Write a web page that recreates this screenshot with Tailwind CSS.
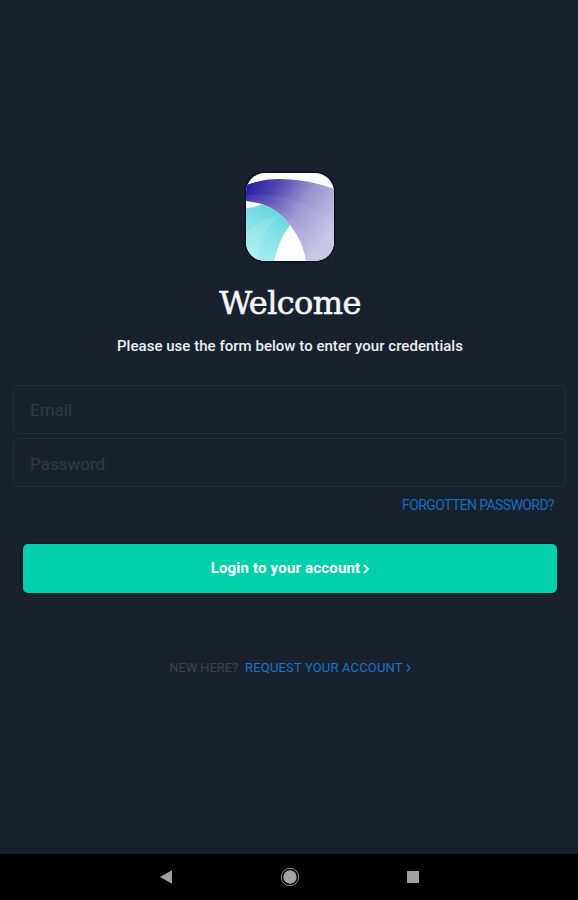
<!DOCTYPE html>
<html lang="en">
<head>
    <meta charset="UTF-8">
    <meta name="viewport" content="width=device-width, initial-scale=1.0">
    <title>Welcome</title>
    <script src="https://cdn.jsdelivr.net/npm/@tailwindcss/browser@4"></script>
</head>
<body class="bg-[#1a212e] font-['Roboto',sans-serif]">
    <div class="h-screen flex flex-col overflow-hidden">
        <main class="flex-1 flex flex-col items-center pt-[173px]">
            <!-- App logo -->
            <div class="ml-0.5 w-[88px] h-[88px] rounded-[19px] overflow-hidden bg-white ring-[1.5px] ring-[#0d111b] shrink-0">
                <svg viewBox="0 0 88 88" class="w-full h-full">
                    <defs>
                        <linearGradient id="purple" x1="0" y1="0.1" x2="0.95" y2="0.65">
                            <stop offset="0" stop-color="#2a1ca4"/>
                            <stop offset="0.25" stop-color="#4f43b0"/>
                            <stop offset="0.6" stop-color="#9993cf"/>
                            <stop offset="1" stop-color="#c6c2e4"/>
                        </linearGradient>
                        <linearGradient id="teal" x1="0.7" y1="0" x2="0.25" y2="1">
                            <stop offset="0" stop-color="#5fd3dc"/>
                            <stop offset="0.5" stop-color="#86e2e8"/>
                            <stop offset="1" stop-color="#a8eef0"/>
                        </linearGradient>
                    </defs>
                    <path fill="url(#purple)" d="M0 12Q16 6 34 6Q62 6 88 16V88H60Q57 68 44 52Q33 37 16 31Q8 29 0 28Z"/>
                    <path fill="#fff" fill-opacity=".06" d="M0 22Q50 18 88 50V88H60Q57 68 44 52Q33 37 16 31Q8 29 0 28Z"/>
                    <path fill="#fff" fill-opacity=".05" d="M0 26Q48 28 76 88H60Q57 68 44 52Q33 37 16 31Q8 29 0 28Z"/>
                    <path fill="url(#teal)" d="M0 35Q9 35 16 31Q33 37 44 52Q33 66 28 88H0Z"/>
                    <path fill="#fff" fill-opacity=".12" d="M0 60Q12 47 34 42Q16 56 11 88H0Z"/>
                </svg>
            </div>

            <h1 class="ml-0.5 mt-[22px] h-10 leading-10 text-[32px] text-[#f4f5f6] font-['DejaVu_Serif',serif] tracking-[-0.6px] [-webkit-text-stroke:0.6px_#f4f5f6] whitespace-nowrap">Welcome</h1>
            <p class="ml-0.5 mt-[11px] h-6 leading-6 text-[15px] font-medium text-[#eceef0] tracking-[0.03px] whitespace-nowrap">Please use the form below to enter your credentials</p>

            <!-- Login form -->
            <form class="w-full mt-[27px] pl-[13px] pr-3 flex flex-col">
                <input type="email" placeholder="Email" class="w-full h-[49px] px-4 rounded-md border border-[#262e3a] text-[17px] text-white placeholder:text-[#303945]">
                <input type="password" placeholder="Password" class="w-full mt-1 h-[49px] px-4 pt-0.5 rounded-md border border-[#262e3a] text-[17px] text-white placeholder:text-[#303945]">
                <a href="#" class="self-end mt-2 mr-3 h-5 leading-5 text-sm text-[#146cbe] tracking-[-0.6px] whitespace-nowrap">FORGOTTEN PASSWORD?</a>
                <button type="button" class="mt-[29px] ml-2.5 mr-[9px] h-[49px] rounded-[5px] bg-[#00d1ab] ring-1 ring-[#131a29] flex items-center justify-center gap-[3px] text-[15px] font-bold text-white">
                    <span class="tracking-[0.18px] whitespace-nowrap">Login to your account</span>
                    <svg viewBox="0 0 6 10" class="w-1.5 h-2.5" fill="none" stroke="currentColor" stroke-width="1.8"><path d="M1 1l4 4-4 4"/></svg>
                </button>
            </form>

            <div class="ml-0.5 mt-[65px] flex items-center h-5 text-[13px] whitespace-nowrap">
                <span class="text-[#3c434d] tracking-[-0.1px]">NEW HERE?</span>
                <a href="#" class="ml-[7px] flex items-center gap-[3px] text-[#1476c9]">
                    <span class="tracking-[0.16px]">REQUEST YOUR ACCOUNT</span>
                    <svg viewBox="0 0 5 8" class="w-[5px] h-2" fill="none" stroke="currentColor" stroke-width="1.3"><path d="M1 .7l3 3.3-3 3.3"/></svg>
                </a>
            </div>
        </main>

        <!-- Android navigation bar -->
        <nav class="h-[46px] bg-black shrink-0 flex justify-between items-center pl-40 pr-[159px]">
            <svg viewBox="0 0 12 14" class="w-3 h-3.5" fill="#a0a0a0"><path d="M0 7L12 .3V13.7Z"/></svg>
            <svg viewBox="0 0 20 20" class="w-5 h-5"><circle cx="10" cy="10" r="8.7" fill="none" stroke="#8a8a8a" stroke-width="1"/><circle cx="10" cy="10" r="6.7" fill="#a3a3a3"/></svg>
            <svg viewBox="0 0 12 12" class="w-3 h-3" fill="#a0a0a0"><rect width="12" height="12" rx=".5"/></svg>
        </nav>
    </div>
</body>
</html>
